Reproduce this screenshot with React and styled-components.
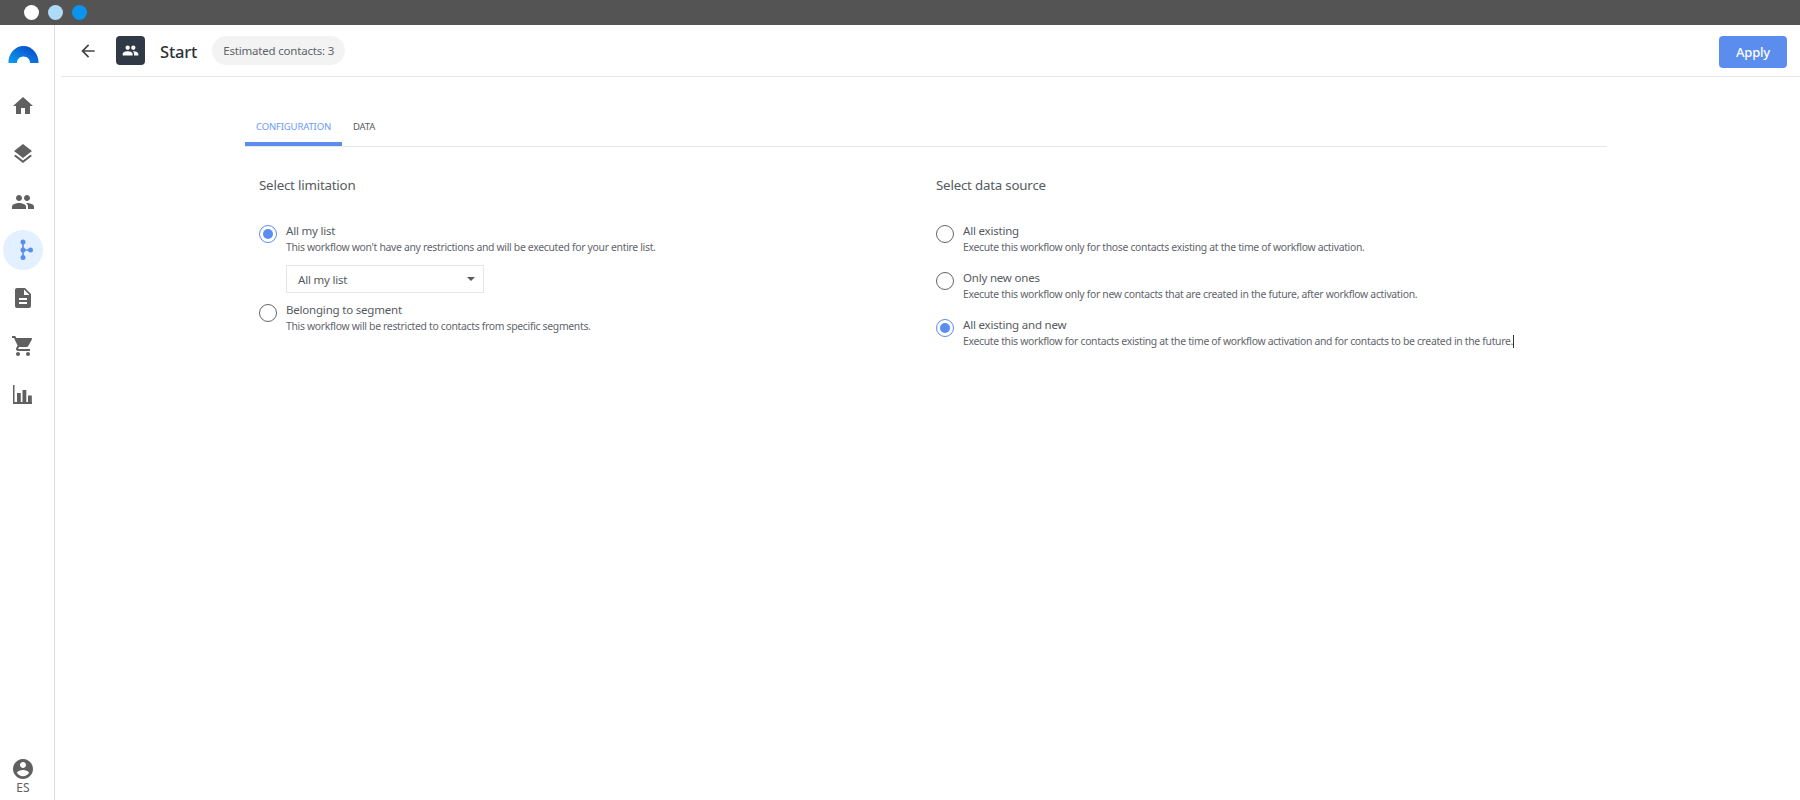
import React from "react";
import styled, { createGlobalStyle } from "styled-components";

const Global = createGlobalStyle`
  html, body { margin: 0; padding: 0; background: #fff; }
  body { font-family: "Noto Sans", "Open Sans", sans-serif; color: #555b61; }
`;

const Page = styled.div`
  width: 1800px; height: 800px; display: flex; flex-direction: column; overflow: hidden;
`;
const WindowBar = styled.div`
  height: 25px; flex: none; background: #545454; display: flex; align-items: center; gap: 9px; padding-left: 24px;
`;
const Dot = styled.span`
  width: 15px; height: 15px; border-radius: 50%; background: ${p => p.$c};
`;
const Shell = styled.div`
  flex: 1; display: flex; min-height: 0;
`;
const Sidebar = styled.nav`
  flex: none; border-right: 1px solid #dedede; display: flex; flex-direction: column; align-items: center;
  padding: 21px 8px 0 0; box-sizing: content-box; width: 46px;
`;
const Logo = styled.svg`
  width: 31px; height: 17px; flex: none; margin-bottom: 23px;
`;
const NavItem = styled.div`
  width: 40px; height: 40px; flex: none; margin-bottom: 8px; border-radius: 50%; display: flex; align-items: center; justify-content: center;
  background: ${p => (p.$active ? "#e3f0ff" : "transparent")};
  color: #606060;
`;
const Account = styled.div`
  margin-top: auto; margin-bottom: 5px; display: flex; flex-direction: column; align-items: center; font-size: 12px; line-height: 14px; color: #606060;
`;
const Main = styled.main`
  flex: 1; min-width: 0; display: flex; flex-direction: column;
`;
const Header = styled.header`
  height: 51px; flex: none; margin-left: 6px; border-bottom: 1px solid #e6e6e6; display: flex; align-items: center; padding: 0 13px 0 17px;
`;
const BackIcon = styled.svg`
  width: 20px; height: 20px; color: #444; flex: none; margin-right: 18px;
`;
const IconBox = styled.div`
  width: 29px; height: 29px; border-radius: 4px; background: #2f3a46; color: #fff; display: flex; align-items: center; justify-content: center; flex: none; margin-right: 15px;
`;
const Title = styled.h1`
  margin: 1px 15px 0 0; font-size: 16.5px; font-weight: 500; color: #2c3238; letter-spacing: -0.2px;
`;
const Pill = styled.div`
  height: 29px; width: 133px; box-sizing: border-box; border-radius: 15px; background: #f3f3f3; display: flex; align-items: center; justify-content: center;
  font-size: 11.5px; color: #5d6369; letter-spacing: -0.2px; white-space: nowrap;
`;
const Apply = styled.button`
  margin-left: auto; margin-top: 2px; width: 68px; height: 32px; border: 0; border-radius: 4px; background: #5b8def; color: #fff; font: 500 13px "Noto Sans", sans-serif; letter-spacing: -0.2px;
`;
const Content = styled.div`
  padding: 20px 193px 0 190px;
`;
const Tabs = styled.div`
  display: flex; height: 50px; border-bottom: 1px solid #e6e6e6; box-sizing: border-box; align-items: stretch;
`;
const Tab = styled.div`
  padding: 9px 11px 0; display: flex; align-items: center; font-size: 9.5px; letter-spacing: -0.15px; text-transform: uppercase;
  color: ${p => (p.$active ? "#6a9bf4" : "#555b61")};
  box-shadow: ${p => (p.$active ? "inset 0 -4px 0 #5b8def" : "none")};
  border-radius: 3px 3px 0 0;
`;
const Columns = styled.div`
  display: grid; grid-template-columns: 677px 1fr; padding-left: 14px; padding-top: 28px;
`;
const Column = styled.section`
  display: flex; flex-direction: column;
`;
const Heading = styled.h2`
  margin: 0 0 27px; font-size: 13.3px; line-height: 20px; font-weight: 400; color: #555b61; letter-spacing: -0.2px;
`;
const Option = styled.div`
  display: flex; gap: 9px; box-sizing: border-box;
  height: ${p => p.$h || 47}px;
`;
const Radio = styled.span`
  width: 18px; height: 18px; box-sizing: border-box; border-radius: 50%; flex: none; margin-top: 3px;
  border: 1px solid ${p => (p.$on ? "#5b8def" : "#666")};
  display: flex; align-items: center; justify-content: center;
  &::after { content: ""; width: 10px; height: 10px; border-radius: 50%; background: ${p => (p.$on ? "#5b8def" : "transparent")}; }
`;
const OptionText = styled.div`
  display: flex; flex-direction: column; padding-top: 1px;
`;
const Label = styled.div`
  font-size: 11.5px; line-height: 16px; color: #555b61; letter-spacing: -0.2px; white-space: nowrap;
`;
const Desc = styled.div`
  font-size: 10.4px; line-height: 16px; color: #5f656b; letter-spacing: -0.31px; white-space: nowrap;
`;
const SelectBox = styled.div`
  margin: 0 0 8px 27px; width: 198px; height: 28px; box-sizing: border-box; border: 1px solid #e6e6e6; display: flex; align-items: center; justify-content: space-between; padding: 0 8px 0 11px;
  font-size: 11.5px; color: #555b61; letter-spacing: -0.2px;
  &::after { content: ""; border-style: solid; border-color: #555b61 transparent transparent; border-width: 4px 4.5px 0; }
`;
const Cursor = styled.span`
  display: inline-block; width: 1px; height: 13px; background: #333; vertical-align: -3px;
`;

const I = ({ d, s = 24 }) => (
  <svg width={s} height={s} viewBox="0 0 24 24" fill="currentColor"><path d={d} /></svg>
);
const P = {
  home: "M10 20v-6h4v6h5v-8h3L12 3 2 12h3v8z",
  layers: "M11.99 18.54l-7.37-5.73L3 14.07l9 7 9-7-1.63-1.27-7.38 5.74zM12 16l7.36-5.73L21 9l-9-7-9 7 1.63 1.27L12 16z",
  people: "M16 11c1.66 0 2.99-1.34 2.99-3S17.66 5 16 5c-1.66 0-3 1.34-3 3s1.34 3 3 3zm-8 0c1.66 0 2.99-1.34 2.99-3S9.66 5 8 5C6.34 5 5 6.34 5 8s1.34 3 3 3zm0 2c-2.33 0-7 1.17-7 3.5V19h14v-2.5c0-2.33-4.67-3.5-7-3.5zm8 0c-.29 0-.62.02-.97.05 1.16.84 1.97 1.97 1.97 3.45V19h6v-2.5c0-2.33-4.67-3.5-7-3.5z",
  doc: "M14 2H6c-1.1 0-1.99.9-1.99 2L4 20c0 1.1.89 2 1.99 2H18c1.1 0 2-.9 2-2V8l-6-6zm2 16H8v-2h8v2zm0-4H8v-2h8v2zm-3-5V3.5L18.5 9H13z",
  cart: "M7 18c-1.1 0-1.99.9-1.99 2S5.9 22 7 22s2-.9 2-2-.9-2-2-2zM1 2v2h2l3.6 7.59-1.35 2.45c-.16.28-.25.61-.25.96 0 1.1.9 2 2 2h12v-2H7.42c-.14 0-.25-.11-.25-.25l.03-.12.9-1.63h7.45c.75 0 1.41-.41 1.75-1.03l3.58-6.49c.08-.14.12-.31.12-.48 0-.55-.45-1-1-1H5.21l-.94-2H1zm16 16c-1.1 0-1.99.9-1.99 2s.89 2 1.99 2 2-.9 2-2-.9-2-2-2z",
  chart: "M2 3h1.5v17H6v-9h3.800v9h1.700V8h3.800v12h1.700v-6.500h3.800V20h.2v2H2z",
  account: "M12 2C6.48 2 2 6.48 2 12s4.48 10 10 10 10-4.48 10-10S17.52 2 12 2zm0 3c1.66 0 3 1.34 3 3s-1.34 3-3 3-3-1.34-3-3 1.34-3 3-3zm0 14.2c-2.5 0-4.71-1.28-6-3.22.03-1.99 4-3.08 6-3.08 1.99 0 5.97 1.09 6 3.08-1.29 1.94-3.5 3.22-6 3.22z",
  back: "M20 11H7.83l5.59-5.59L12 4l-8 8 8 8 1.41-1.41L7.83 13H20v-2z",
};

const FlowIcon = () => (
  <svg width="24" height="24" viewBox="0 0 24 24" fill="#5b8def">
    <path d="M11.200 4h1.600v16h-1.600zM12 11.200h7.500v1.600H12z" />
    <circle cx="12" cy="4" r="2.500" /><circle cx="12" cy="12" r="2.500" /><circle cx="12" cy="19.500" r="2.500" /><circle cx="19.500" cy="12" r="2.500" />
  </svg>
);

const OptionRow = ({ on, label, desc, h, cursor }) => (
  <Option $h={h}>
    <Radio $on={on} />
    <OptionText>
      <Label>{label}</Label>
      <Desc>{desc}{cursor && <Cursor />}</Desc>
    </OptionText>
  </Option>
);

export default function App() {
  return (
    <Page>
      <Global />
      <WindowBar>
        <Dot $c="#ffffff" /><Dot $c="#aedcf8" /><Dot $c="#0a94ec" />
      </WindowBar>
      <Shell>
        <Sidebar>
          <Logo viewBox="0 0 32 18">
            <defs>
              <linearGradient id="lg" x1="0" y1="1" x2="1" y2="0">
                <stop offset="0" stopColor="#0aa0ee" /><stop offset="1" stopColor="#0a3fc8" />
              </linearGradient>
            </defs>
            <path d="M0 18C0 8 7 0 16 0s16 8 16 18H23c0-4-3-7-7-7s-7 3-7 7z" fill="url(#lg)" />
          </Logo>
          <NavItem><I d={P.home} /></NavItem>
          <NavItem><I d={P.layers} /></NavItem>
          <NavItem><I d={P.people} /></NavItem>
          <NavItem $active><FlowIcon /></NavItem>
          <NavItem><I d={P.doc} /></NavItem>
          <NavItem><I d={P.cart} /></NavItem>
          <NavItem><I d={P.chart} /></NavItem>
          <Account><I d={P.account} />ES</Account>
        </Sidebar>
        <Main>
          <Header>
            <BackIcon viewBox="0 0 24 24" fill="currentColor"><path d={P.back} /></BackIcon>
            <IconBox><I d={P.people} s={17} /></IconBox>
            <Title>Start</Title>
            <Pill>Estimated contacts: 3</Pill>
            <Apply>Apply</Apply>
          </Header>
          <Content>
            <Tabs>
              <Tab $active>Configuration</Tab>
              <Tab>Data</Tab>
            </Tabs>
            <Columns>
              <Column>
                <Heading>Select limitation</Heading>
                <OptionRow on h={43} label="All my list" desc="This workflow won't have any restrictions and will be executed for your entire list." />
                <SelectBox>All my list</SelectBox>
                <OptionRow label="Belonging to segment" desc="This workflow will be restricted to contacts from specific segments." />
              </Column>
              <Column>
                <Heading>Select data source</Heading>
                <OptionRow label="All existing" desc="Execute this workflow only for those contacts existing at the time of workflow activation." />
                <OptionRow label="Only new ones" desc="Execute this workflow only for new contacts that are created in the future, after workflow activation." />
                <OptionRow on cursor label="All existing and new" desc="Execute this workflow for contacts existing at the time of workflow activation and for contacts to be created in the future." />
              </Column>
            </Columns>
          </Content>
        </Main>
      </Shell>
    </Page>
  );
}
